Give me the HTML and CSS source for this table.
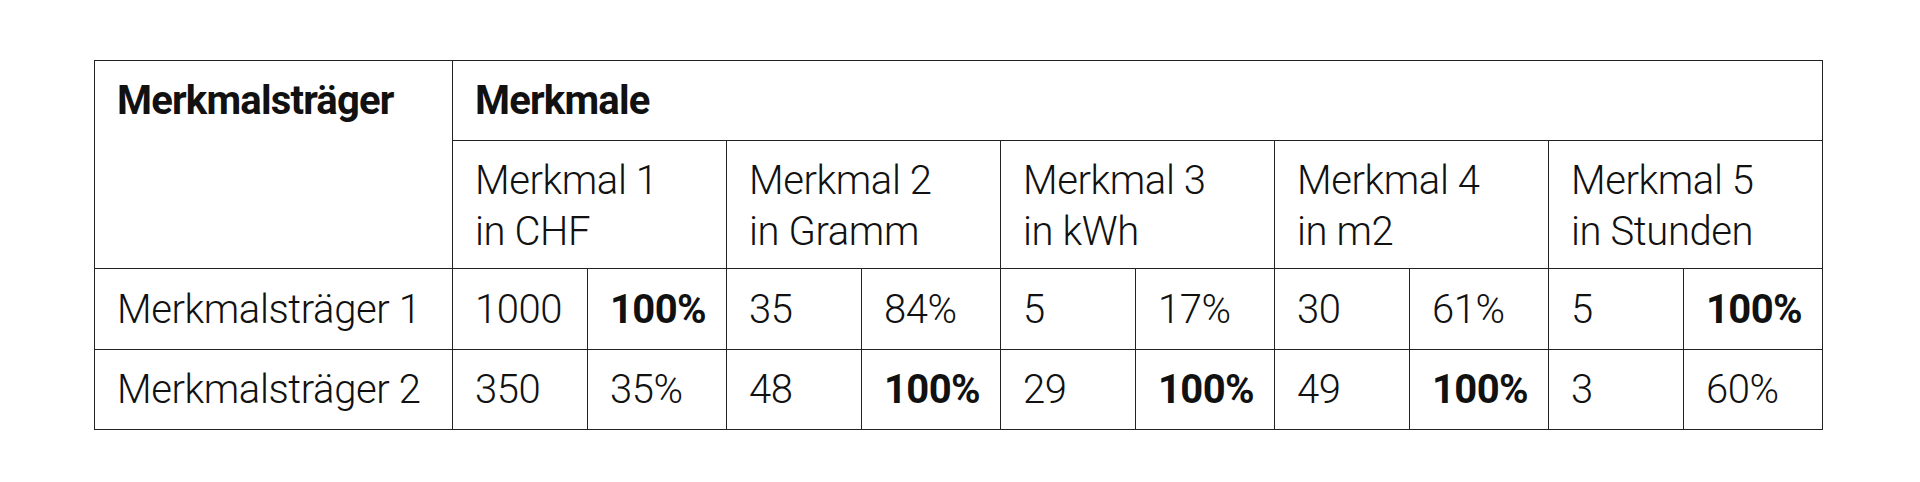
FILE: index.html
```html
<!DOCTYPE html>
<html lang="de">
<head>
<meta charset="utf-8">
<title>Merkmale</title>
<link rel="stylesheet" href="styles.css">
</head>
<body>
<main class="page">
  <table class="data">
    <colgroup>
      <col class="c-head">
      <col class="c-a"><col class="c-b">
      <col class="c-a"><col class="c-b">
      <col class="c-a"><col class="c-b">
      <col class="c-a"><col class="c-b">
      <col class="c-a"><col class="c-b">
    </colgroup>
    <thead>
      <tr class="r-top">
        <th class="corner" rowspan="2">Merkmalsträger</th>
        <th class="group" colspan="10">Merkmale</th>
      </tr>
      <tr class="r-sub">
        <th class="sub" colspan="2">Merkmal 1<br>in CHF</th>
        <th class="sub" colspan="2">Merkmal 2<br>in Gramm</th>
        <th class="sub" colspan="2">Merkmal 3<br>in kWh</th>
        <th class="sub" colspan="2">Merkmal 4<br>in m2</th>
        <th class="sub" colspan="2">Merkmal 5<br>in Stunden</th>
      </tr>
    </thead>
    <tbody>
      <tr class="r-data r-1">
        <td>Merkmalsträger 1</td>
        <td>1000</td><td class="max">100%</td>
        <td>35</td><td>84%</td>
        <td>5</td><td>17%</td>
        <td>30</td><td>61%</td>
        <td>5</td><td class="max">100%</td>
      </tr>
      <tr class="r-data r-2">
        <td>Merkmalsträger 2</td>
        <td>350</td><td>35%</td>
        <td>48</td><td class="max">100%</td>
        <td>29</td><td class="max">100%</td>
        <td>49</td><td class="max">100%</td>
        <td>3</td><td>60%</td>
      </tr>
    </tbody>
  </table>
</main>
</body>
</html>
```

FILE: styles.css
```css
html, body {
  margin: 0;
  padding: 0;
  background: #ffffff;
}

.page {
  padding: 60px 0 0 94px;
}

.data {
  border-collapse: collapse;
  table-layout: fixed;
  width: 1729px;
  font-family: Roboto, "Open Sans", "Liberation Sans", sans-serif;
  font-size: 40px;
  font-weight: 300;
  line-height: 51px;
  letter-spacing: -0.4px;
  color: #111111;
  border: 1px solid #3a3a3a;
}

.c-head { width: 358px; }
.c-a { width: 135px; }
.c-b { width: 139px; }

.data th,
.data td {
  border: 1px solid #222222;
  padding: 0 0 0 22px;
  text-align: left;
  vertical-align: middle;
  white-space: nowrap;
}

.data th {
  font-weight: 300;
}

.data .corner,
.data .group {
  font-weight: 700;
  letter-spacing: -0.8px;
}

.data .corner {
  vertical-align: top;
  padding-top: 14px;
}

.r-top { height: 80px; }
.r-sub { height: 128px; }
.r-1 { height: 81px; }
.r-2 { height: 80px; }

.data .sub {
  padding-top: 2px;
}

.data .max {
  font-weight: 700;
  letter-spacing: -0.6px;
}
```
